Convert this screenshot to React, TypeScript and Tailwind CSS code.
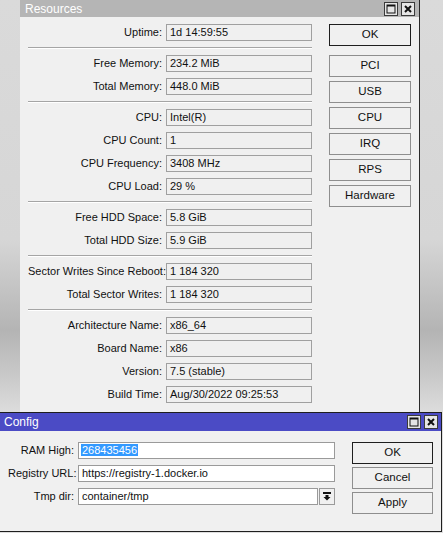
import React from "react"

type Item = { label: string; value: string }

// resource groups, split by separators
const groups: Item[][] = [
  [{ label: "Uptime:", value: "1d 14:59:55" }],
  [
    { label: "Free Memory:", value: "234.2 MiB" },
    { label: "Total Memory:", value: "448.0 MiB" },
  ],
  [
    { label: "CPU:", value: "Intel(R)" },
    { label: "CPU Count:", value: "1" },
    { label: "CPU Frequency:", value: "3408 MHz" },
    { label: "CPU Load:", value: "29 %" },
  ],
  [
    { label: "Free HDD Space:", value: "5.8 GiB" },
    { label: "Total HDD Size:", value: "5.9 GiB" },
  ],
  [
    { label: "Sector Writes Since Reboot:", value: "1 184 320" },
    { label: "Total Sector Writes:", value: "1 184 320" },
  ],
  [
    { label: "Architecture Name:", value: "x86_64" },
    { label: "Board Name:", value: "x86" },
    { label: "Version:", value: "7.5 (stable)" },
    { label: "Build Time:", value: "Aug/30/2022 09:25:53" },
  ],
]

const sideButtons = ["PCI", "USB", "CPU", "IRQ", "RPS", "Hardware"]

function TitleButtons() {
  return (
    <div className="flex gap-[3px]">
      <div className="w-[14px] h-[14px] border border-[#3a3a3a] bg-[#e6e6e6] flex items-center justify-center">
        <svg width="10" height="10" viewBox="0 0 10 10">
          <rect x="1" y="1" width="8" height="8" fill="none" stroke="#111" strokeWidth="1" />
          <rect x="1" y="1" width="8" height="1.5" fill="#111" />
        </svg>
      </div>
      <div className="w-[14px] h-[14px] border border-[#3a3a3a] bg-[#e6e6e6] flex items-center justify-center">
        <svg width="10" height="10" viewBox="0 0 10 10">
          <path d="M2 2 L8 8 M8 2 L2 8" stroke="#111" strokeWidth="2" />
        </svg>
      </div>
    </div>
  )
}

function Button({ children, primary }: { children: React.ReactNode; primary?: boolean }) {
  return (
    <div
      className={
        "h-[22px] flex items-center justify-center bg-[#f0f0f0] text-[#111] text-[11.5px] border " +
        (primary ? "border-[#1e1e1e]" : "border-[#8e8e8e]")
      }
    >
      {children}
    </div>
  )
}

function Separator() {
  return <div className="my-[6px] h-[2px] border-t border-[#a5a5a5] border-b border-b-white" />
}

function ResourcesWindow() {
  return (
    <div className="ml-[20px] w-[400px] h-[412px] shrink-0 bg-[#f0f0f0] border-r border-[#2a2a2a] flex flex-col">
      <div className="h-[17px] bg-[#b5b5b5] flex items-center justify-between pl-[5px] pr-[4px]">
        <span className="text-white text-[12px]">Resources</span>
        <TitleButtons />
      </div>
      <div className="flex pl-[8px] pt-[7px]">
        <div className="w-[284px] flex flex-col">
          {groups.map((g, i) => (
            <div key={i}>
              {i > 0 && <Separator />}
              <div className="flex flex-col gap-[6px]">
                {g.map((item) => (
                  <div key={item.label} className="h-[17px] flex items-center gap-[4px]">
                    <div className="w-[134px] text-right whitespace-nowrap text-[#111]">{item.label}</div>
                    <div className="w-[146px] h-[17px] border border-[#a0a0a0] px-[3px] leading-[15px] text-[#111]">
                      {item.value}
                    </div>
                  </div>
                ))}
              </div>
            </div>
          ))}
        </div>
        <div className="ml-[17px] w-[82px] flex flex-col">
          <Button primary>OK</Button>
          <div className="mt-[9px] flex flex-col gap-[4px]">
            {sideButtons.map((b) => (
              <Button key={b}>{b}</Button>
            ))}
          </div>
        </div>
      </div>
    </div>
  )
}

function ConfigWindow() {
  return (
    <div className="w-[442px] h-[120px] shrink-0 bg-[#f0f0f0] border-y border-r border-[#1e1e1e] flex flex-col">
      <div className="h-[18px] bg-[#4b4bc5] flex items-center justify-between pl-[4px] pr-[3px]">
        <span className="text-white text-[12px]">Config</span>
        <TitleButtons />
      </div>
      <div className="flex pl-[8px] pt-[11px]">
        <div className="flex flex-col gap-[6px]">
          <div className="h-[17px] flex items-center gap-[4px]">
            <div className="w-[66px] text-right whitespace-nowrap">RAM High:</div>
            <div className="w-[257px] h-[17px] border border-[#9a9a9a] bg-white px-[2px] leading-[15px]">
              <span className="bg-[#3399ff] text-white px-[1px]">268435456</span>
            </div>
          </div>
          <div className="h-[17px] flex items-center gap-[4px]">
            <div className="w-[66px] text-right whitespace-nowrap">Registry URL:</div>
            <div className="w-[257px] h-[17px] border border-[#9a9a9a] bg-white px-[3px] leading-[15px]">
              https://registry-1.docker.io
            </div>
          </div>
          <div className="h-[17px] flex items-center gap-[4px]">
            <div className="w-[66px] text-right whitespace-nowrap">Tmp dir:</div>
            <div className="w-[240px] h-[17px] border border-[#9a9a9a] bg-white px-[3px] leading-[15px]">
              container/tmp
            </div>
            <div className="-ml-[3px] w-[16px] h-[17px] border border-[#9a9a9a] bg-[#f0f0f0] flex items-center justify-center">
              <svg width="8" height="9" viewBox="0 0 8 9">
                <rect x="0" y="0" width="8" height="2" fill="#111" />
                <path d="M2.5 3 H5.5 V5 H7.5 L4 8.5 L0.5 5 H2.5 Z" fill="#111" />
              </svg>
            </div>
          </div>
        </div>
        <div className="ml-[17px] w-[81px] flex flex-col gap-[3px]">
          <Button primary>OK</Button>
          <Button>Cancel</Button>
          <Button>Apply</Button>
        </div>
      </div>
    </div>
  )
}

export default function App() {
  return (
    <div className="w-[443px] h-[533px] overflow-hidden flex flex-col text-[11px] text-[#111] font-['Liberation_Sans',Arial,sans-serif] bg-[linear-gradient(180deg,#dadada_0%,#d6d6d6_45%,#b4b4b4_62%,#c8c8c8_70%,#dedede_78%)]">
      <ResourcesWindow />
      <ConfigWindow />
    </div>
  )
}
